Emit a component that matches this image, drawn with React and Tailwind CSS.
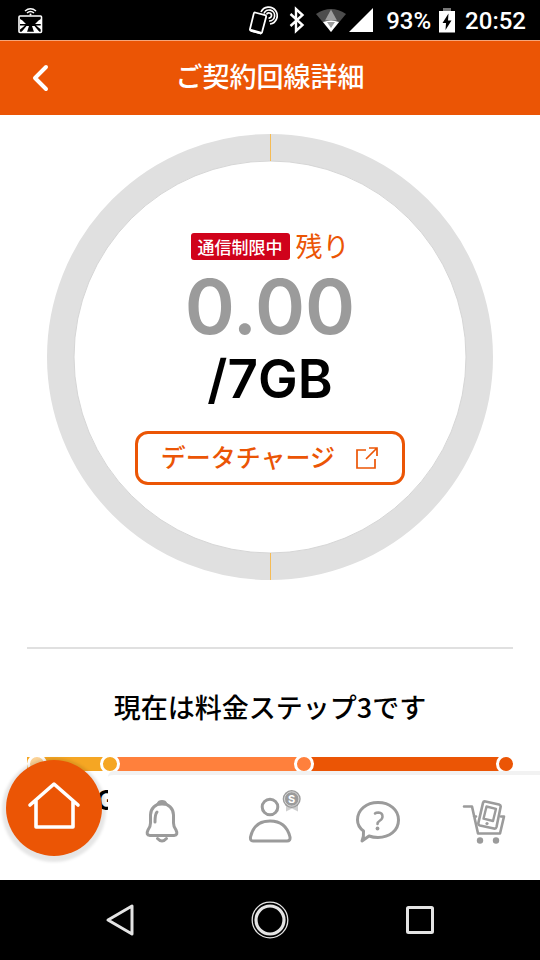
import React from "react";

const steps = [
  { label: "0GB", dot: "left-[2%]", dotColor: "bg-[#fbd296]", place: "left-0" },
  { label: "1GB", dot: "left-[17%]", dotColor: "bg-[#f5a623]", place: "left-[17%] -translate-x-1/2" },
  { label: "4GB", dot: "left-[57%]", dotColor: "bg-[#ff803c]", place: "left-[57%] -translate-x-1/2" },
  { label: "7GB", dot: "left-[98.5%]", dotColor: "bg-[#eb5505]", place: "right-0" },
];

const StatusBar = () => (
  <div className="flex h-10 shrink-0 items-center justify-between bg-black pr-3.5 pl-4 text-white">
    <svg width="28" height="40" viewBox="0 0 28 40" fill="none" stroke="white">
      <path d="M9 11q5.500-4.500 11 0M11 13q3.500-3 7 0" strokeWidth="1.500" />
      <circle cx="14.500" cy="14.500" r="1" fill="white" stroke="none" />
      <rect x="3" y="16" width="22.500" height="16.500" rx="1" strokeWidth="1.600" />
      <path d="M4 24h6l-3.500-3.500L4 19zM25 24h-6l3.500-3.500L25 19zM4 25.500h5l-5 4zM25 25.500h-5l5 4zM10.500 26l-5 6h5.500l2-6zM18.500 26l5 6H18l-2-6z" fill="white" stroke="none" />
    </svg>
    <div className="flex items-center gap-2">
      <svg width="126" height="40" viewBox="0 0 126 40" fill="none" stroke="white">
        <path d="M7 12.500l10 2.700q1.500.4 1.100 1.900l-4 15q-.5 1.500-2 1.100l-9-2.400q-1.500-.4-1.100-1.900l3.700-15q.4-1.600 1.300-1.400z" strokeWidth="1.800" />
        <path d="M3 29l11 3-1 2.500-10-2.800z" fill="white" stroke="none" />
        <path d="M13 12a8.500 8.500 0 1 1 9 12M16 13.500a5.500 5.500 0 1 1 5 7.500M18.500 14.500a2.600 2.600 0 1 1 2 3.500" strokeWidth="1.700" />
        <path d="M42.500 14l12 11-6.500 6V9l6.500 6-12 11" strokeWidth="2.400" />
        <path d="M68 14q15-10 30 0L83 32z" fill="#4c4c4c" stroke="none" />
        <path d="M83 9.500l6 11H77z" fill="#9e9e9e" stroke="none" />
        <path d="M75 22q8-3 16 0l-8 10z" fill="white" stroke="none" />
        <path d="M79 22h8l-4 6z" fill="#9e9e9e" stroke="none" />
        <path d="M101 32h24V8z" fill="white" stroke="none" />
      </svg>
      <span className="pt-0.5 pl-1 font-[Roboto,sans-serif] text-2xl font-medium">93%</span>
      <svg width="16" height="40" viewBox="1 0 16 40">
        <path d="M5 8h8v3H5z" fill="#777" />
        <path d="M1 11h16v21.500H1z" fill="white" />
        <path d="M10.500 13.500L4.500 23H8l-.5 7 6-9.500H10z" fill="black" />
      </svg>
      <span className="pt-0.5 pl-0.5 font-[Roboto,sans-serif] text-2xl font-medium">20:52</span>
    </div>
  </div>
);

const Header = () => (
  <header className="grid h-[75px] shrink-0 grid-cols-[80px_1fr_80px] items-center border-t border-[#f6a67a] bg-[#eb5505] text-white">
    <button type="button" aria-label="戻る" className="flex h-full items-center justify-center">
      <svg width="20" height="32" viewBox="0 0 20 32" fill="none" stroke="white" strokeWidth="4" strokeLinecap="round" strokeLinejoin="round">
        <path d="M16 5L5 16l11 11" />
      </svg>
    </button>
    <h1 className="pb-1 text-center text-[27px] font-medium">ご契約回線詳細</h1>
  </header>
);

const UsageRing = () => (
  <section className="grid px-5">
    <svg viewBox="0 0 446 446" fill="none" className="col-start-1 row-start-1 w-full">
      <circle cx="223" cy="223" r="209.500" stroke="#e0e0e0" strokeWidth="27" />
      <circle cx="223" cy="223" r="196" stroke="#d6d6d6" strokeWidth="1" />
      <path d="M223.500 0v27M223.500 419v27" stroke="#f5bb55" />
    </svg>
    <div className="col-start-1 row-start-1 flex flex-col items-center pt-[98px]">
      <p className="flex items-center gap-1.5 leading-7">
        <span className="rounded-[3px] bg-[#d0021b] px-[7px] text-[17px] leading-[27px] font-medium text-white">
          通信制限中
        </span>
        <span className="text-[27px] text-[#eb5505]">残り</span>
      </p>
      <p className="font-[Inter,sans-serif] text-[76px] leading-[92px] font-semibold text-[#9b9b9b]">0.00</p>
      <p className="font-[Inter,sans-serif] text-[53px] leading-[54px] font-semibold text-black">/7GB</p>
      <button
        type="button"
        className="mt-[25px] flex h-[54px] w-[270px] items-center justify-center gap-5 rounded-[13px] border-3 border-[#eb5505] pb-0.5 text-[25px] font-medium text-[#eb5505]"
      >
        データチャージ
        <svg width="24" height="24" viewBox="0 0 24 24" fill="none" stroke="currentColor" strokeWidth="1.700">
          <path d="M11 5H2v18h18v-9M11 14L22 3M14 3h8v8" />
        </svg>
      </button>
    </div>
  </section>
);

const StepBar = () => (
  <section>
    <h2 className="text-center text-[27px] leading-10 font-medium text-black">
      現在は料金ステップ3です
    </h2>
    <div className="relative mt-[30px] flex h-[14px] overflow-hidden">
      <span className="w-[17%] bg-[#f5a623]" />
      <span className="w-[40%] bg-[#ff803c]" />
      <span className="flex-1 bg-[#eb5505]" />
      {steps.map((step) => (
        <span
          key={step.label}
          className={`absolute top-1/2 h-5 w-5 -translate-1/2 rounded-full border-3 border-white ${step.dot} ${step.dotColor}`}
        />
      ))}
    </div>
    <div className="relative mt-4 h-7 text-[27px] leading-7 font-semibold text-black">
      {steps.map((step) => (
        <span key={step.label} className={`absolute font-[Inter,sans-serif] ${step.place}`}>
          {step.label}
        </span>
      ))}
    </div>
  </section>
);

const BellIcon = () => (
  <svg width="36" height="44" viewBox="0 0 36 44" fill="none" stroke="#9b9b9b" strokeWidth="3" strokeLinecap="round">
    <path d="M6.500 15a11.500 11.500 0 0 1 23 0v8q0 4 2.500 7 2.500 5-2 5.500H6q-4.500-.5-2-5.500 2.500-3 2.500-7z" />
    <path d="M13 12q-2 2-2 10" />
    <path d="M14 4q1-2.500 4-2.500T22 4z" fill="#9b9b9b" />
    <path d="M13.500 38.500q4.500 5 9 0" />
  </svg>
);

const MemberIcon = () => (
  <svg width="54" height="54" viewBox="0 0 54 54" fill="none" stroke="#9b9b9b" strokeWidth="3">
    <circle cx="22" cy="18" r="7.800" />
    <path d="M5 52h34q3.500 0 3-4Q38 32 22 32T2.500 48q-.5 4 2.500 4z" />
    <path d="M38 15v7.500l6-3 6 3V15z" fill="#cfcfcf" stroke="none" />
    <circle cx="43.700" cy="10" r="9" fill="#9b9b9b" stroke="none" />
    <circle cx="43.700" cy="10" r="7.200" stroke="#d8d8d8" strokeWidth="1" />
    <text x="43.700" y="14" textAnchor="middle" fill="white" stroke="none" className="font-[Inter,sans-serif] text-[11px] font-bold">
      S
    </text>
  </svg>
);

const ChatIcon = () => (
  <svg width="46" height="44" viewBox="0 0 46 44" fill="none" stroke="#9b9b9b" strokeWidth="3" strokeLinejoin="round">
    <path d="M8.500 31Q2.500 26.500 2.500 20C2.500 9.500 11.500 2.500 23 2.500S43.500 9.500 43.500 20 34.500 37.500 23 37.500q-5 0-9-1.500L7 41q2-4 1.500-10z" />
    <path d="M20 13.500q1-1 3.500-1 4 .3 4 4 0 2.500-2.500 4-2.500 1.500-2.500 3.500" strokeWidth="2.500" strokeLinecap="round" />
    <circle cx="22.500" cy="28.500" r="1.900" fill="#9b9b9b" stroke="none" />
  </svg>
);

const CartIcon = () => (
  <svg width="46" height="44" viewBox="0 0 46 44" fill="none" stroke="#9b9b9b" strokeWidth="2.600" strokeLinecap="round" strokeLinejoin="round">
    <path d="M2 6.500h8L16 33.500h22l4-17h-3M12 16.500h2" />
    <path d="M23.500 1.500l13.500 3q2 .6 1.600 2.600L34.500 27q-.6 2-2.600 1.500L18 25.500q-2-.6-1.600-2.600l4.600-20q.5-1.800 2.500-1.400z" />
    <path d="M24.500 6.500l9.500 2.300-3 12.200-9.500-2.300z" strokeWidth="2.400" />
    <circle cx="25" cy="23.500" r="1.600" fill="#9b9b9b" stroke="none" />
    <circle cx="18" cy="40.500" r="3.200" fill="#9b9b9b" stroke="none" />
    <circle cx="34" cy="40.500" r="3.200" fill="#9b9b9b" stroke="none" />
  </svg>
);

const navItems = [
  { label: "お知らせ", Icon: BellIcon, className: "rounded-tl-md pb-3" },
  { label: "会員情報", Icon: MemberIcon, className: "pb-6 pl-2.5" },
  { label: "お問い合わせ", Icon: ChatIcon, className: "pb-3" },
  { label: "ショップ", Icon: CartIcon, className: "pr-0.5 pb-3" },
];

const TabBar = () => (
  <nav className="absolute inset-x-0 bottom-0 grid h-[109px] grid-cols-5">
    <a href="#home" aria-label="ホーム" className="flex items-start justify-center">
      <span className="-mt-[11px] flex h-24 w-24 items-center justify-center rounded-full bg-[#eb5505] pb-1 shadow-[0_2px_3px_4px_rgba(0,0,0,0.1)]">
        <svg width="54" height="50" viewBox="0 0 54 50" fill="none" stroke="white" strokeWidth="3.600" strokeLinecap="round" strokeLinejoin="round">
          <path d="M3 24L27 3l24 21M9 20v26h37V20" />
        </svg>
      </span>
    </a>
    {navItems.map(({ label, Icon, className }) => (
      <a
        key={label}
        href="#menu"
        aria-label={label}
        className={`flex items-center justify-center border-t-4 border-[#f2f2f2] bg-white ${className}`}
      >
        <Icon />
      </a>
    ))}
  </nav>
);

const SystemNav = () => (
  <div className="flex h-20 shrink-0 items-center justify-center gap-[110px] bg-black">
    <button type="button" aria-label="Back">
      <svg width="40" height="40" viewBox="0 0 40 40" fill="none" stroke="#e4e4e4" strokeWidth="3" strokeLinejoin="round">
        <path d="M32 6v28L8 20z" />
      </svg>
    </button>
    <button type="button" aria-label="Home">
      <svg width="40" height="40" viewBox="0 0 40 40" fill="none" stroke="#e4e4e4">
        <circle cx="20" cy="20" r="17.800" strokeWidth="1.300" />
        <circle cx="20" cy="20" r="14" strokeWidth="3.200" />
      </svg>
    </button>
    <button type="button" aria-label="Overview">
      <svg width="40" height="40" viewBox="0 0 40 40" fill="none" stroke="#e4e4e4" strokeWidth="3">
        <rect x="7.500" y="7.500" width="25" height="25" rx="1" />
      </svg>
    </button>
  </div>
);

const App = () => (
  <div className="flex h-screen flex-col bg-white font-['Noto_Sans_CJK_JP',sans-serif]">
    <StatusBar />
    <Header />
    <div className="relative min-h-0 flex-1 overflow-hidden">
      <main className="px-[27px] pt-[19px]">
        <UsageRing />
        <hr className="mt-[67px] mb-[38px] border-t-2 border-[#e0e0e0]" />
        <StepBar />
      </main>
      <TabBar />
    </div>
    <SystemNav />
  </div>
);

export default App;
